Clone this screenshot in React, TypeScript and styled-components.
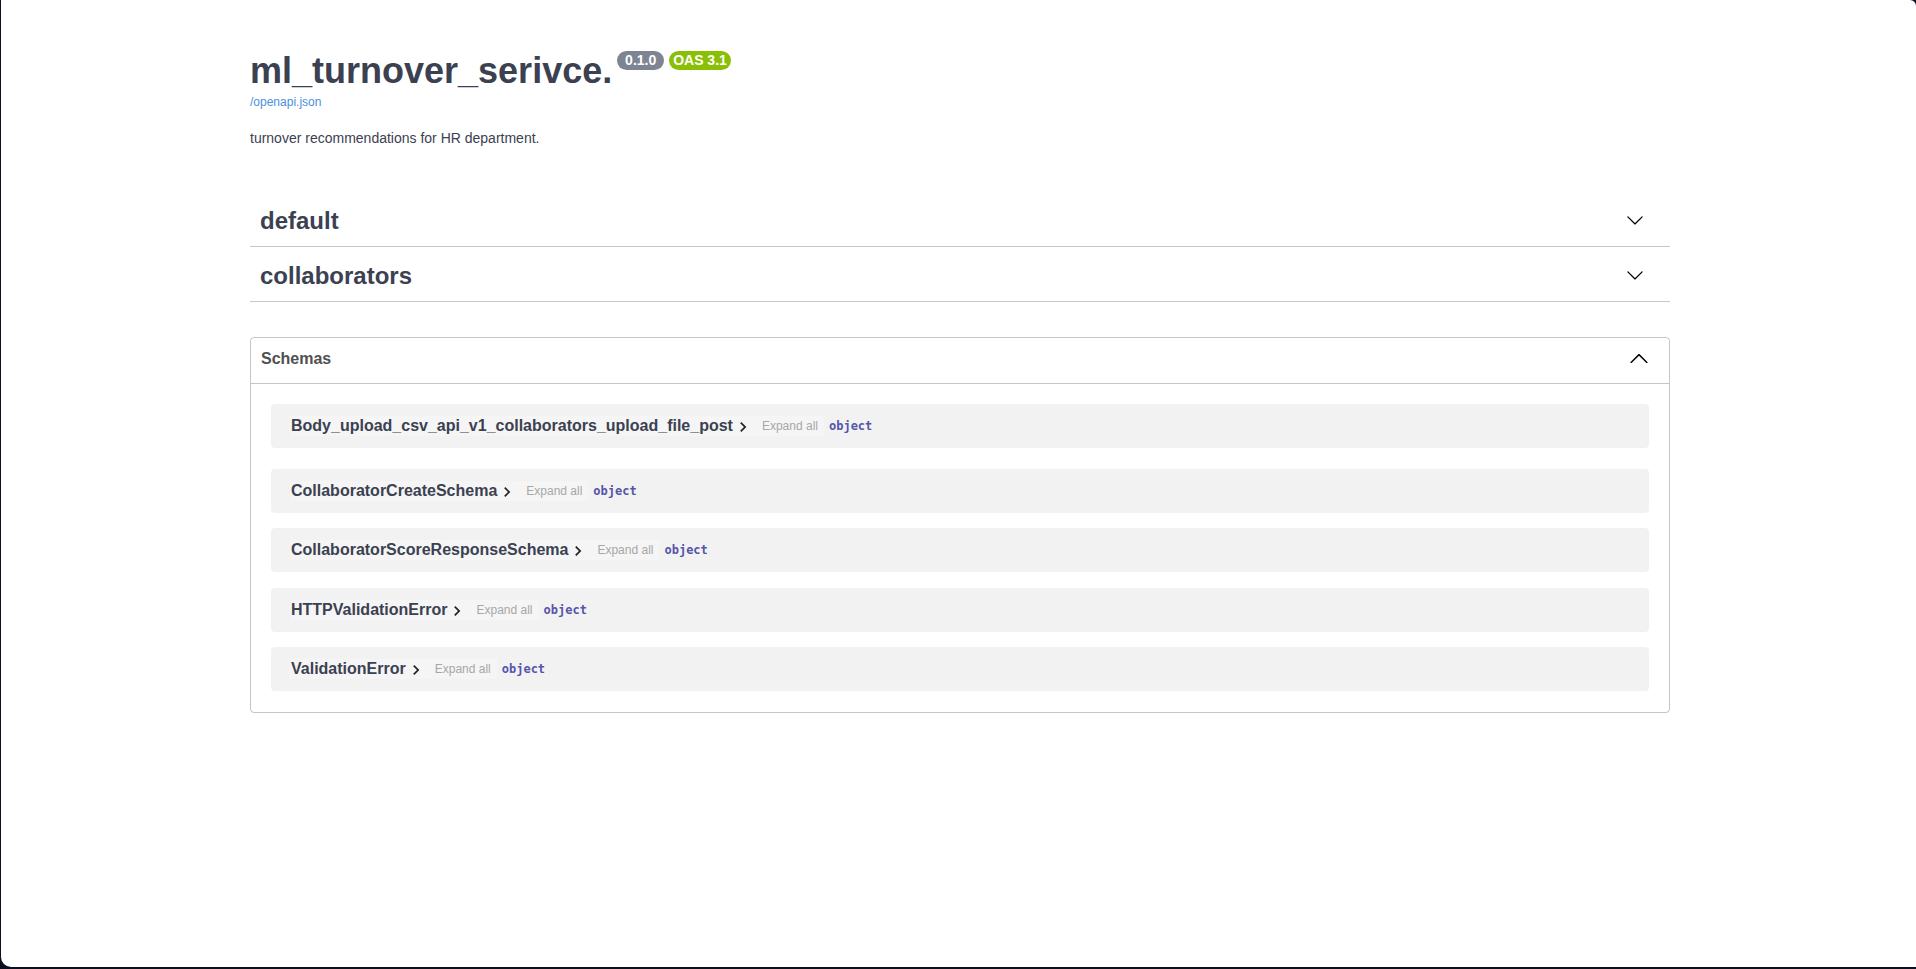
import styled, { createGlobalStyle } from "styled-components";

const GlobalStyle = createGlobalStyle`
  html, body {
    margin: 0;
    background: #0b1020;
  }
  body {
    font-family: "Liberation Sans", Arial, sans-serif;
    color: #3b4151;
  }
`;

const Frame = styled.div`
  box-sizing: border-box;
  display: flow-root;
  min-height: calc(100vh - 2px);
  margin-left: 1px;
  padding-left: 3px;
  background: #fff;
  border-radius: 0 6px 0 10px;
`;

const Wrapper = styled.div`
  max-width: 1420px;
  margin: 0 auto;
`;

const Info = styled.div`
  margin: 50px 0 51px;
`;

const Title = styled.h2`
  display: flex;
  align-items: flex-start;
  margin: 0;
  font-size: 36px;
  line-height: 42px;
  font-weight: bold;
  color: #3b4151;
`;

const Badge = styled.small<{ $color: string }>`
  margin: 1px 0 0 5px;
  padding: 2px 4px;
  border-radius: 57px;
  background: ${(p) => p.$color};
  color: #fff;
  font-size: 14px;
  line-height: 15px;
  font-weight: bold;
  white-space: pre;
`;

const SpecLink = styled.a`
  display: block;
  margin-top: 3px;
  font-size: 12px;
  line-height: 14px;
  color: #4990e2;
  text-decoration: none;
`;

const Description = styled.p`
  margin: 21px 0 0;
  font-size: 14px;
  line-height: 16px;
  color: #3b4151;
`;

const TagHeader = styled.h3`
  display: flex;
  align-items: center;
  justify-content: space-between;
  margin: 0 0 5px;
  padding: 10px 26px 11px 10px;
  border-bottom: 1px solid rgba(59, 65, 81, 0.3);
  font-size: 24px;
  line-height: 28px;
  font-weight: bold;
  color: #3b4151;

  svg {
    margin-bottom: 3px;
  }
`;

const Models = styled.section`
  margin-top: 35px;
  border: 1px solid rgba(59, 65, 81, 0.3);
  border-radius: 4px;
`;

const ModelsHeader = styled.h4`
  display: flex;
  align-items: center;
  justify-content: space-between;
  margin: 0;
  padding: 8px 20px 12px 10px;
  border-bottom: 1px solid rgba(59, 65, 81, 0.3);
  font-size: 16px;
  line-height: 25px;
  font-weight: bold;
  color: #505050;
`;

const ModelList = styled.div`
  display: flex;
  flex-direction: column;
  gap: 15.5px;
  padding: 20px 20px 21px;
`;

const ModelCard = styled.div`
  box-sizing: border-box;
  display: flex;
  align-items: center;
  height: 44px;
  padding: 0 19px;
  border-radius: 4px;
  background: rgba(0, 0, 0, 0.05);

  &:first-child {
    margin-bottom: 5px;
  }
`;

const ModelControl = styled.button`
  display: inline-flex;
  align-items: center;
  height: 20px;
  padding: 0 0 0 1px;
  border: none;
  background: rgba(255, 255, 255, 0.25);
  font-family: inherit;
  cursor: pointer;
`;

const ModelTitle = styled.span`
  font-size: 16px;
  font-weight: bold;
  color: #3b4151;
`;

const Toggle = styled.svg`
  margin: 0 4px 0 0;
  position: relative;
  top: 1px;
`;

const ExpandAll = styled.button`
  height: 20px;
  padding: 0 6px 0 5px;
  border: none;
  background: rgba(255, 255, 255, 0.25);
  font-family: inherit;
  font-size: 12px;
  color: #a7a7a7;
  cursor: pointer;
`;

const PropType = styled.span`
  margin-left: 5px;
  font-family: "DejaVu Sans Mono", "Liberation Mono", monospace;
  font-size: 12px;
  font-weight: bold;
  color: #55a;
`;

const Arrow = ({ up, size }: { up?: boolean; size: number }) => (
  <svg
    width={size}
    height={size}
    viewBox="0 0 20 20"
    style={up ? { transform: "rotate(180deg)" } : undefined}
  >
    <path
      fill="#000"
      d="M17.418 6.109c.272-.268.709-.268.979 0s.271.701 0 .969l-7.908 7.83c-.27.268-.707.268-.979 0l-7.908-7.83c-.27-.268-.27-.701 0-.969.271-.268.709-.268.979 0L10 13.25l7.418-7.141z"
    />
  </svg>
);

const tags = ["default", "collaborators"];

const schemas = [
  "Body_upload_csv_api_v1_collaborators_upload_file_post",
  "CollaboratorCreateSchema",
  "CollaboratorScoreResponseSchema",
  "HTTPValidationError",
  "ValidationError",
];

const App = () => {
  return (
    <>
      <GlobalStyle />
      <Frame>
        <Wrapper>
          <Info>
            <Title>
              <span>ml_turnover_serivce.</span>
              <Badge $color="#7d8492">{" 0.1.0 "}</Badge>
              <Badge $color="#89bf04">OAS 3.1</Badge>
            </Title>
            <SpecLink href="#">/openapi.json</SpecLink>
            <Description>turnover recommendations for HR department.</Description>
          </Info>

          {tags.map((tag) => (
            <TagHeader key={tag}>
              <span>{tag}</span>
              <Arrow size={18} />
            </TagHeader>
          ))}

          <Models>
            <ModelsHeader>
              <span>Schemas</span>
              <Arrow up size={20} />
            </ModelsHeader>
            <ModelList>
              {schemas.map((name) => (
                <ModelCard key={name}>
                  <ModelControl>
                    <ModelTitle>{name}</ModelTitle>
                    <Toggle width={20} height={20} viewBox="0 0 24 24">
                      <path fill="#222" d="M10 6 8.59 7.41 13.17 12l-4.58 4.59L10 18l6-6z" />
                    </Toggle>
                  </ModelControl>
                  <ExpandAll>Expand all</ExpandAll>
                  <PropType>object</PropType>
                </ModelCard>
              ))}
            </ModelList>
          </Models>
        </Wrapper>
      </Frame>
    </>
  );
};

export default App;
